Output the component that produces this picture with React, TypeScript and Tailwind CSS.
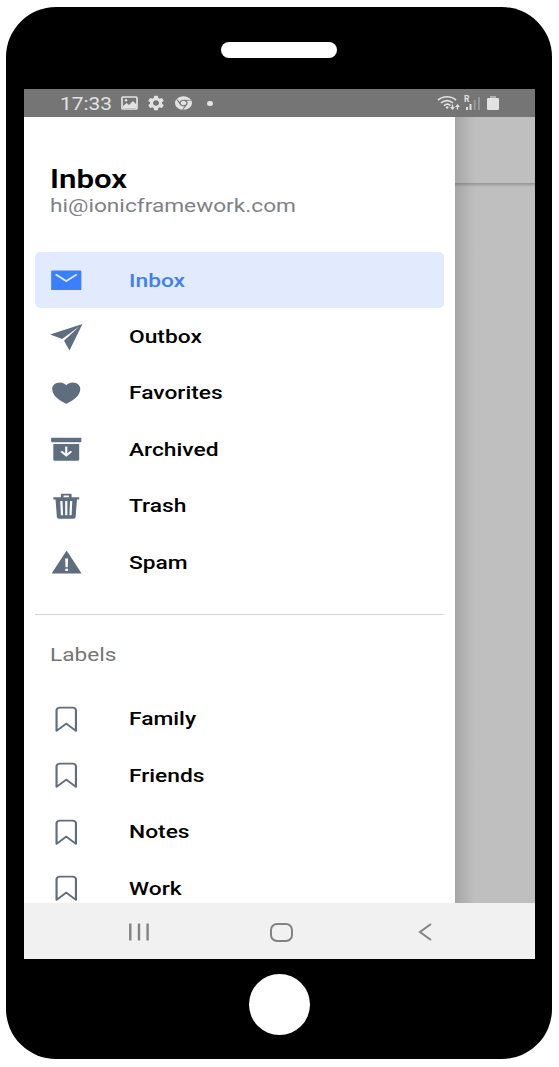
import type { IconType } from "react-icons";
import { FaChrome } from "react-icons/fa";
import {
  IoArchiveSharp,
  IoBookmarkOutline,
  IoHeartSharp,
  IoMailSharp,
  IoPaperPlaneSharp,
  IoTrashSharp,
  IoWarningSharp,
} from "react-icons/io5";
import { MdSettings } from "react-icons/md";

type Entry = { label: string; icon: IconType; active?: boolean };

const folders: Entry[] = [
  { label: "Inbox", icon: IoMailSharp, active: true },
  { label: "Outbox", icon: IoPaperPlaneSharp },
  { label: "Favorites", icon: IoHeartSharp },
  { label: "Archived", icon: IoArchiveSharp },
  { label: "Trash", icon: IoTrashSharp },
  { label: "Spam", icon: IoWarningSharp },
];

const labels: Entry[] = ["Family", "Friends", "Notes", "Work"].map((label) => ({
  label,
  icon: IoBookmarkOutline,
}));

function MenuRow({ label, icon: Icon, active }: Entry) {
  return (
    <li
      className={`flex h-[56.4px] shrink-0 items-center rounded-[5px] pl-[14px] ${
        active ? "bg-[#e2ebfe] text-[#4080ee]" : "text-black"
      }`}
    >
      <Icon
        preserveAspectRatio="none"
        className={`mt-px h-[28.5px] w-[34.5px] shrink-0 ${active ? "text-[#3a7ffd]" : "text-[#5f6d80]"}`}
      />
      <span className="mt-[2px] ml-[45.500px] origin-left scale-x-[1.225] text-[18.6px] leading-none font-medium">
        {label}
      </span>
    </li>
  );
}

function StatusBar() {
  return (
    <div className="flex h-[28px] shrink-0 items-center bg-[#757575] pr-[36px] pl-[35.500px] text-[#e2e2e2]">
      <span className="mt-[2px] w-[53px] text-[18px] leading-none">
        <span className="inline-block origin-left scale-x-[1.16]">17:33</span>
      </span>
      <svg className="ml-[8.500px] h-[14px] w-[17px]" viewBox="0 0 17 14" fill="currentColor">
        <rect x="1" y="1" width="15" height="12" rx="1" fill="none" stroke="currentColor" strokeWidth="1.700" />
        <path d="M2 12V10l3.500-3 2.500 2 4-4 3.500 3.500V12z" />
        <circle cx="5" cy="4.300" r="1.200" />
      </svg>
      <MdSettings preserveAspectRatio="none" className="ml-[8px] h-[18px] w-[20px]" />
      <FaChrome preserveAspectRatio="none" className="ml-[9px] h-[14px] w-[17px]" />
      <span className="ml-[15px] h-[5px] w-[6px] rounded-full bg-current" />
      <svg className="ml-auto h-[16px] w-[23px]" viewBox="0 0 23 16" fill="none" stroke="currentColor">
        <path d="M1 5.200C6 .6 14 .6 19 5.200M4 8c3.500-3.200 8.500-3.200 12 0M7 10.600c2-1.800 4.500-1.800 6.500 0" strokeWidth="1.600" />
        <circle cx="10.200" cy="12.500" r="1.300" fill="currentColor" stroke="none" />
        <path d="M15.500 9.500v3.500M20.500 11v3.500" strokeWidth="1.300" />
        <path d="M13 12h5l-2.500 3zM18 12h5L20.500 9z" fill="currentColor" stroke="none" />
      </svg>
      <svg className="ml-[4px] h-[16px] w-[17px]" viewBox="0 0 17 16" fill="currentColor">
        <text x="0" y="7" fontSize="8.500" fontWeight="700">
          R
        </text>
        <path d="M2 12h2v3H2zM5.500 9h2v6h-2z" />
        <path d="M9.800 5h1.800v10H9.800zM14 2h1.800v13H14z" fillOpacity=".35" />
      </svg>
      <span className="ml-[6px] flex flex-col items-center">
        <span className="h-[2px] w-[6px] bg-[#b0b0b0]" />
        <span className="h-[12px] w-[12px] rounded-[1px] bg-current" />
      </span>
    </div>
  );
}

function NavigationBar() {
  return (
    <div className="flex h-[56px] shrink-0 items-center bg-[#f1f1f1] pt-[2px] pl-[105px] text-[#828282]">
      <svg className="h-[18px] w-[20px]" viewBox="0 0 20 18" fill="none" stroke="currentColor" strokeWidth="2.400">
        <path d="M1.300 .5v17M10 .5v17M18.600 .5v17" />
      </svg>
      <span className="ml-[121px] h-[19px] w-[23px] rounded-[7px] border-2 border-current" />
      <svg className="ml-[125px] h-[18px] w-[14px]" viewBox="0 0 14 18" fill="none" stroke="currentColor" strokeWidth="2">
        <path d="M13 1 2 9l11 8" />
      </svg>
    </div>
  );
}

export default function App() {
  return (
    <div className="h-[1067px] w-[559px] overflow-hidden bg-white pt-[7px] pl-[6px] font-['Roboto',sans-serif]">
      <div className="flex h-[1052px] w-[546px] flex-col items-center rounded-[50px] bg-black">
        <div className="mt-[35px] h-[16px] w-[116px] shrink-0 rounded-full bg-white" />
        <div className="mt-[31px] ml-px flex h-[870px] w-[511px] shrink-0 flex-col overflow-hidden bg-white">
          <StatusBar />
          <div className="flex h-[786px] shrink-0">
            <aside className="flex w-[431.400px] shrink-0 flex-col overflow-hidden bg-white pr-[11.500px] pl-[11px]">
              <header className="h-[134.700px] shrink-0 pt-[47px] pl-[15px]">
                <h1 className="w-fit origin-left scale-x-[1.225] text-[25.500px] leading-[30px] font-semibold">Inbox</h1>
                <p className="mt-px w-fit origin-left scale-x-[1.220] text-[18.600px] leading-[22px] text-[#7f8186]">
                  hi@ionicframework.com
                </p>
              </header>
              <ul className="flex flex-col">
                {folders.map((entry) => (
                  <MenuRow key={entry.label} {...entry} />
                ))}
              </ul>
              <div className="mt-[24px] h-px shrink-0 bg-[#d4d4d4]" />
              <h2 className="mt-[28.500px] ml-[15px] h-[47px] w-fit shrink-0 origin-left scale-x-[1.220] text-[18.600px] leading-[22px] text-[#757575]">
                Labels
              </h2>
              <ul className="flex flex-col">
                {labels.map((entry) => (
                  <MenuRow key={entry.label} {...entry} />
                ))}
              </ul>
            </aside>
            <div className="flex flex-1 bg-[#bfbfbf]">
              <div className="flex flex-1 flex-col bg-linear-to-r from-[#00000022] to-transparent to-[20px]">
                <div className="h-[66px]" />
                <div className="h-[4px] bg-linear-to-b from-[#00000038] to-transparent" />
              </div>
            </div>
          </div>
          <NavigationBar />
        </div>
        <div className="mt-[15px] ml-px h-[61px] w-[61px] shrink-0 rounded-full bg-white" />
      </div>
    </div>
  );
}
